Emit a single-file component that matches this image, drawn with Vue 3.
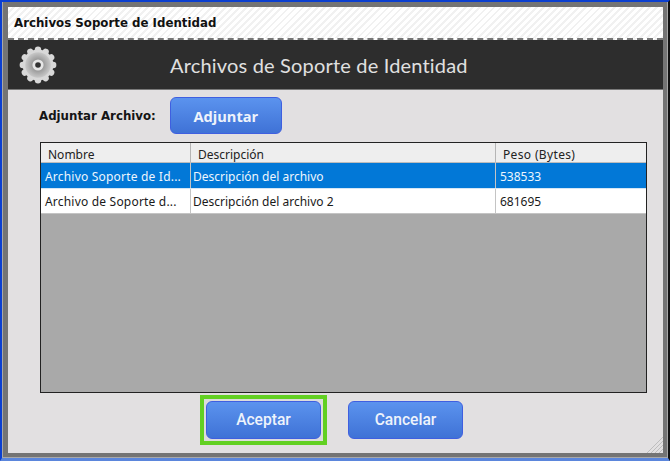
<script setup>
const columns = [
  { label: 'Nombre', cls: 'c1' },
  { label: 'Descripción', cls: 'c2' },
  { label: 'Peso (Bytes)', cls: 'c3' }
]
const rows = [
  { name: 'Archivo Soporte de Id...', desc: 'Descripción del archivo', size: '538533', selected: true },
  { name: 'Archivo de Soporte d...', desc: 'Descripción del archivo 2', size: '681695', selected: false }
]
const teeth = Array.from({ length: 12 }, (_, i) => i * 30)
</script>

<template>
  <div class="screen">
    <div class="frame">
      <div class="window">
        <div class="titlebar">Archivos Soporte de Identidad</div>
        <div class="banner">
          <svg class="gear" width="38" height="38" viewBox="0 0 38 38">
            <defs>
              <radialGradient id="gearFill" cx="50%" cy="50%" r="50%">
                <stop offset="0" stop-color="#6f6f6f" />
                <stop offset="0.55" stop-color="#a4a4a4" />
                <stop offset="1" stop-color="#c8c8c8" />
              </radialGradient>
            </defs>
            <g fill="#d8d8d8">
              <circle v-for="t in teeth" :key="t" cx="19" cy="3.8" r="3.2" :transform="`rotate(${t} 19 19)`" />
            </g>
            <circle cx="19" cy="19" r="15.4" fill="#d8d8d8" />
            <circle cx="19" cy="19" r="12.8" fill="url(#gearFill)" />
            <circle cx="19" cy="19" r="5.6" fill="#e6e6e6" />
            <circle cx="19" cy="19" r="2.8" fill="#333" />
          </svg>
          <div class="banner-title">Archivos de Soporte de Identidad</div>
        </div>
        <div class="body">
          <div class="attach">
            <span class="attach-label">Adjuntar Archivo:</span>
            <button class="btn btn-attach">Adjuntar</button>
          </div>
          <div class="table">
            <div class="thead">
              <div v-for="c in columns" :key="c.label" class="th" :class="c.cls">{{ c.label }}</div>
            </div>
            <div v-for="r in rows" :key="r.size" class="tr" :class="{ selected: r.selected }">
              <div class="td c1">{{ r.name }}</div>
              <div class="td c2">{{ r.desc }}</div>
              <div class="td c3">{{ r.size }}</div>
            </div>
          </div>
          <div class="actions">
            <div class="focus-ring"><button class="btn btn-action">Aceptar</button></div>
            <button class="btn btn-action">Cancelar</button>
          </div>
          <svg class="grip" width="16" height="16" viewBox="0 0 16 16">
            <path d="M0 16L16 0M4 16L16 4M8 16L16 8M12 16L16 12" stroke="#bdbdbd" stroke-width="1" fill="none" />
          </svg>
        </div>
      </div>
    </div>
  </div>
</template>

<style scoped>
.screen {
  width: 670px;
  height: 461px;
  box-sizing: border-box;
  background: #7f7f7f;
  border-top: 2px solid #0b3fd0;
  border-left: 2px solid #0b3fd0;
  border-right: 2px solid #111;
  border-bottom: 3px solid #5b86dc;
  overflow: hidden;
}
.frame {
  height: 100%;
  box-sizing: border-box;
  padding: 5px 4px 4px 5px;
  background: #747474;
  border-left: 1px solid #a8a8a8;
  border-right: 1px solid #a8a8a8;
  border-bottom: 1px solid #a8a8a8;
}
.window {
  height: 100%;
  display: flex;
  flex-direction: column;
  background: #e2e0e1;
}
.titlebar {
  height: 33px;
  flex: none;
  box-sizing: border-box;
  padding-left: 6px;
  display: flex;
  align-items: center;
  font: bold 11.8px "DejaVu Sans", sans-serif;
  color: #111;
  background: repeating-linear-gradient(135deg, #fff 0 3px, #f1f1f1 3px 5px);
  border-bottom: 2px dashed #777;
}
.banner {
  height: 50px;
  flex: none;
  box-sizing: border-box;
  display: flex;
  align-items: center;
  background: #2d2d2d;
  border-bottom: 1px solid #7a7a7a;
  padding-left: 11px;
}
.gear {
  flex: none;
}
.banner-title {
  margin-left: 113px;
  font: 20px Lato, "Open Sans", sans-serif;
  letter-spacing: 0.18px;
  color: #e0e0e0;
}
.body {
  position: relative;
  flex: 1;
  padding: 7px 16px 0 31px;
}
.attach {
  display: flex;
  align-items: center;
  gap: 14px;
}
.attach-label {
  font: bold 11.8px "DejaVu Sans", sans-serif;
  color: #151515;
}
.btn {
  box-sizing: border-box;
  border: 1px solid #3f5fe0;
  border-radius: 6px;
  background: linear-gradient(#5b93ee, #3f72d6);
  color: #eef3fb;
  padding: 0;
}
.btn-attach {
  width: 112px;
  height: 37px;
  font: 700 14.6px "Open Sans", sans-serif;
}
.table {
  margin: 8px 0 0 1px;
  width: 607px;
  height: 251px;
  box-sizing: border-box;
  border: 1px solid #222;
  background: #a9a9a9;
}
.thead,
.tr {
  display: flex;
  box-sizing: border-box;
}
.thead {
  height: 20px;
  background: #eeeeee;
  border-bottom: 1px solid #bcbcbc;
}
.th {
  box-sizing: border-box;
  padding: 3px 0 0 7px;
  font: 12px "Noto Sans", sans-serif;
  color: #222;
  border-right: 1px solid #b5b5b5;
}
.th.c3 {
  letter-spacing: 0.35px;
}
.c1 {
  width: 150px;
  flex: none;
}
.c2 {
  width: 305px;
  flex: none;
}
.c3 {
  flex: 1;
  border-right: none;
}
.tr {
  height: 25px;
  background: #fff;
  color: #1a1a1a;
  border-bottom: 1px solid #c4c4c4;
}
.tr.selected {
  background: #0278d7;
  color: #eef6fd;
  border-bottom: 1px solid #d4e6f5;
  height: 26px;
}
.td {
  box-sizing: border-box;
  padding: 5px 3px 0 3px;
  font: 12px "Noto Sans", sans-serif;
  white-space: nowrap;
  border-right: 1px solid #c4c4c4;
}
.tr:not(.selected) .td {
  padding-top: 4px;
}
.td.c1 {
  padding-left: 4px;
  letter-spacing: 0.2px;
}
.td.c2 {
  padding-left: 2px;
}
.td.c3 {
  padding-left: 4px;
  border-right: none;
}
.actions {
  margin: 2px 0 0 161px;
  display: flex;
  align-items: center;
  gap: 21px;
}
.focus-ring {
  padding: 2px;
  border: 4px solid #62d022;
  background: #dcdcdc;
  display: flex;
}
.btn-action {
  width: 115px;
  height: 38px;
  font: 500 15.6px Roboto, sans-serif;
}
.grip {
  position: absolute;
  right: 0;
  bottom: 0;
}
</style>

<style>
html, body { margin: 0; padding: 0; }
</style>
